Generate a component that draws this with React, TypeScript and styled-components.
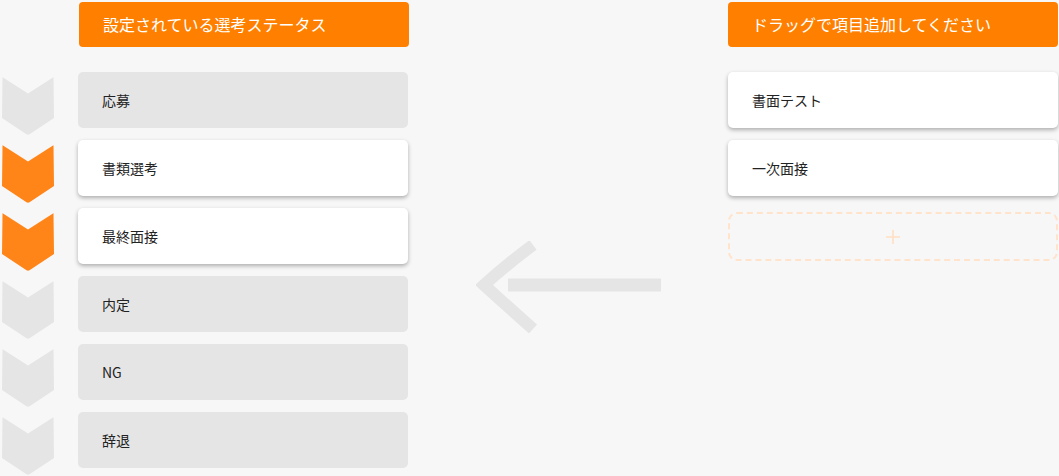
import React from 'react'
import styled, { createGlobalStyle } from 'styled-components'

type Status = {
  label: string
  active: boolean
}

const statuses: Status[] = [
  { label: '応募', active: false },
  { label: '書類選考', active: true },
  { label: '最終面接', active: true },
  { label: '内定', active: false },
  { label: 'NG', active: false },
  { label: '辞退', active: false },
]

const candidates = ['書面テスト', '一次面接']

const Chevron: React.FC<{ active: boolean }> = ({ active }) => (
  <ChevronIcon viewBox="0 0 52 58" aria-hidden>
    <path
      d="M0.5 1 Q0 0 1 0.6 L26 16.6 L51 0.6 Q52 0 51.5 1 L52 41 L27.5 57.3 Q26 58.2 24.5 57.3 L0 41 Z"
      fill={active ? '#ff8519' : '#e5e5e5'}
    />
  </ChevronIcon>
)

const App: React.FC = () => {
  return (
    <>
      <GlobalStyle />
      <Page>
        <LeftColumn>
          <Header>設定されている選考ステータス</Header>
          <StatusList>
            {statuses.map((s) => (
              <StatusRow key={s.label}>
                <Chevron active={s.active} />
                <Card data-active={s.active ? 'true' : 'false'}>{s.label}</Card>
              </StatusRow>
            ))}
          </StatusList>
        </LeftColumn>

        <ArrowArea>
          <svg width="190" height="92" viewBox="0 0 190 92" aria-hidden>
            <path d="M32 44 H185" stroke="#e5e5e5" strokeWidth="13" fill="none" />
            <path
              d="M57 4 Q30 24 8 44 Q30 64 57 88"
              stroke="#e5e5e5"
              strokeWidth="12"
              fill="none"
            />
          </svg>
        </ArrowArea>

        <RightColumn>
          <Header>ドラッグで項目追加してください</Header>
          <CandidateList>
            {candidates.map((c) => (
              <Card key={c} data-active="true">{c}</Card>
            ))}
            <AddBox>
              <svg width="16" height="16" viewBox="0 0 16 16" aria-hidden>
                <path d="M8 1 V15 M1 8 H15" stroke="#ffdfc2" strokeWidth="1.6" />
              </svg>
            </AddBox>
          </CandidateList>
        </RightColumn>
      </Page>
    </>
  )
}

const GlobalStyle = createGlobalStyle`
  html, body {
    margin: 0;
    padding: 0;
    background: #f7f7f7;
    font-family: "Noto Sans CJK JP", "Noto Sans", sans-serif;
  }
`

const Page = styled.div`
  display: grid;
  grid-template-columns: 409px 1fr 331px;
  padding: 2px 0 0 0;
  height: 474px;
  overflow: hidden;
`

const LeftColumn = styled.div`
  display: flex;
  flex-direction: column;
  align-items: flex-end;
`

const RightColumn = styled.div`
  display: flex;
  flex-direction: column;
`

const Header = styled.div`
  width: 330px;
  height: 45px;
  box-sizing: border-box;
  background: #ff7f00;
  border-radius: 4px;
  color: #ffffff;
  font-size: 16px;
  line-height: 45px;
  padding-left: 24px;
  margin-bottom: 25px;
`

const StatusList = styled.div`
  display: flex;
  flex-direction: column;
  gap: 12px;
  width: 409px;
`

const StatusRow = styled.div`
  display: flex;
  align-items: flex-start;
  gap: 24px;
  padding-left: 2px;
  height: 56px;
`

const ChevronIcon = styled.svg`
  width: 52px;
  height: 58px;
  flex: none;
  margin-top: 5px;
`

const Card = styled.div`
  width: 330px;
  height: 56px;
  flex: none;
  box-sizing: border-box;
  border-radius: 5px;
  background: #e5e5e5;
  color: #222222;
  font-size: 14px;
  line-height: 56px;
  padding-left: 24px;
  &[data-active='true'] {
    background: #ffffff;
    box-shadow: 0 2px 4px rgba(0, 0, 0, 0.3);
  }
`

const CandidateList = styled.div`
  display: flex;
  flex-direction: column;
  gap: 12px;
  width: 330px;
`

const AddBox = styled.div`
  height: 49px;
  margin-top: 4px;
  box-sizing: border-box;
  border: 2px dashed #ffe3cb;
  border-radius: 9px;
  display: flex;
  align-items: center;
  justify-content: center;
`

const ArrowArea = styled.div`
  display: flex;
  justify-content: center;
  align-items: flex-start;
  padding-top: 239px;
  padding-left: 5px;
`

export default App
